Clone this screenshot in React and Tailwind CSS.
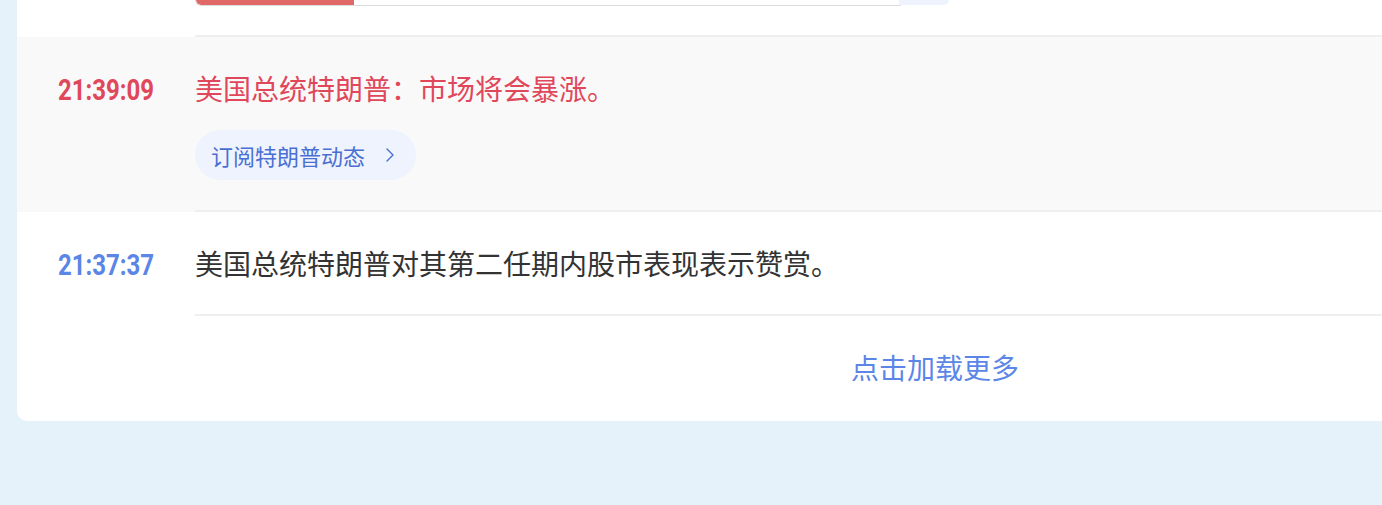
import { ChevronRight } from 'lucide-react';

const cjk = { fontFamily: '"Noto Sans CJK SC", "Noto Sans", sans-serif' };
const num = { fontFamily: 'Roboto, "Liberation Sans", sans-serif' };

export default function App() {
  return (
    <div className="w-[1382px] h-[505px] overflow-hidden bg-[#e6f2f9]" style={cjk}>
      <div className="pl-[17px]">
        <div className="w-[1836px] bg-white rounded-bl-[10px]">

          {/* previous item (bottom of vote bar) */}
          <div className="flex">
            <div className="w-[178px] shrink-0" />
            <div className="flex-1 h-[37px] border-b-2 border-[#efefef]">
              <div className="flex items-start">
                <div className="w-[710px] h-[6px] border-x border-b border-[#dcdcdc] rounded-b-[8px] overflow-hidden flex">
                  <div className="w-[158px] h-full bg-[#e06868] rounded-bl-[8px]" />
                </div>
                <div className="w-[50px] h-[5px] -ml-[6px] bg-[#eef3fd] rounded-br-[8px]" />
              </div>
            </div>
          </div>

          {/* important item */}
          <div className="flex bg-[#f9f9f9]">
            <div className="w-[178px] shrink-0 pl-[41px] pt-[33px]">
              <span className="inline-block origin-left [transform:scaleX(0.8)] text-[30px] leading-[40px] font-bold text-[#e0475a]" style={num}>21:39:09</span>
            </div>
            <div className="flex-1 pt-[31px] pb-[30px] border-b-2 border-[#efefef]">
              <p className="text-[28px] leading-[40px] text-[#e0475a]">美国总统特朗普：市场将会暴涨。</p>
              <button className="mt-[22px] h-[50px] pl-[16px] pr-[14px] rounded-full bg-[#eef3fe] text-[#4a6fd3] text-[22px] flex items-center">
                订阅特朗普动态
                <ChevronRight className="w-[24px] h-[24px] ml-[13px]" strokeWidth={1.4} />
              </button>
            </div>
          </div>

          {/* normal item */}
          <div className="flex">
            <div className="w-[178px] shrink-0 pl-[41px] pt-[33px]">
              <span className="inline-block origin-left [transform:scaleX(0.8)] text-[30px] leading-[40px] font-bold text-[#5b85e6]" style={num}>21:37:37</span>
            </div>
            <div className="flex-1 pt-[31px] pb-[31px] border-b-2 border-[#efefef]">
              <p className="text-[28px] leading-[40px] text-[#333333]">美国总统特朗普对其第二任期内股市表现表示赞赏。</p>
            </div>
          </div>

          {/* load more */}
          <div className="h-[105px] flex items-center justify-center pb-[4px]">
            <span className="text-[28px] leading-[40px] text-[#5b85e6]">点击加载更多</span>
          </div>
        </div>
      </div>
    </div>
  );
}
